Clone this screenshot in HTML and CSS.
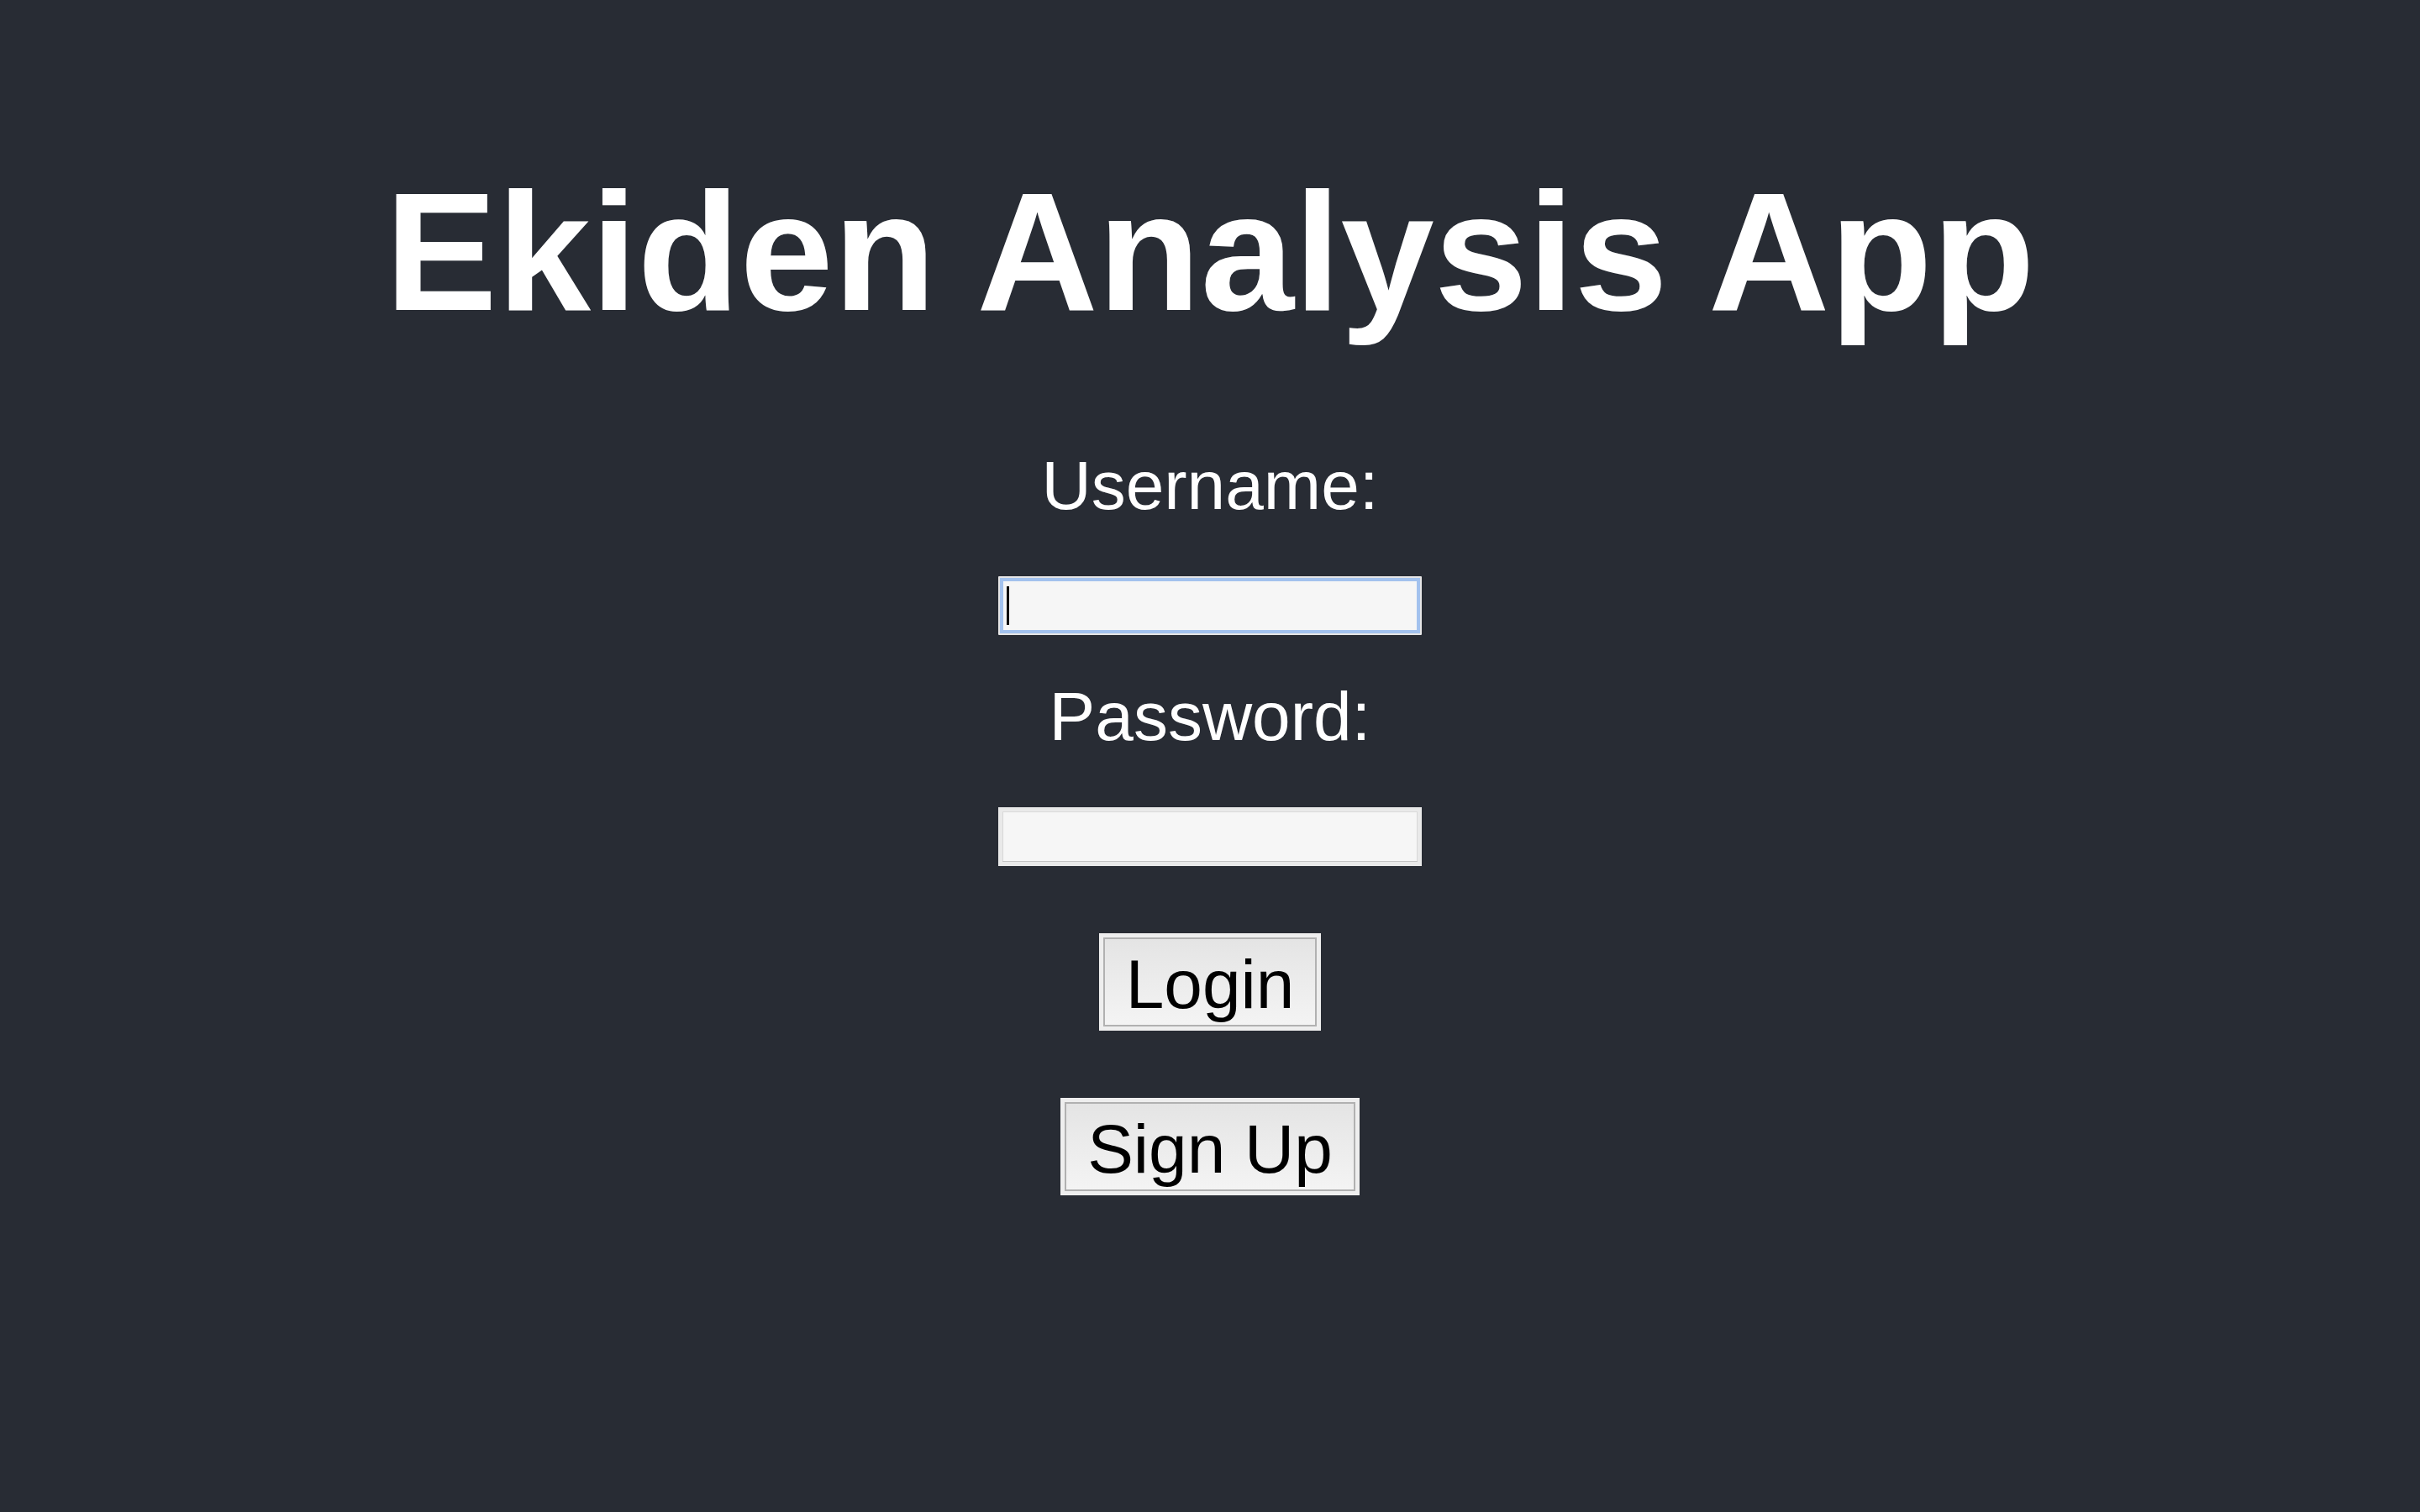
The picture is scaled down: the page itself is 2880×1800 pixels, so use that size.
FILE: index.html
```html
<!DOCTYPE html>
<html lang="en">
<head>
<meta charset="utf-8">
<title>Ekiden Analysis App</title>
<link rel="stylesheet" href="styles.css">
</head>
<body>
<div class="app">
  <header class="app-header">
    <h1 class="title">Ekiden Analysis App</h1>
    <form class="login-form">
      <label class="field-label" for="username">Username:</label>
      <div class="input-wrap input-wrap-user">
        <input class="field field-focused" id="username" type="text">
        <span class="caret"></span>
      </div>
      <label class="field-label" for="password">Password:</label>
      <div class="input-wrap input-wrap-pass">
        <input class="field" id="password" type="password">
      </div>
      <button class="btn btn-login" type="button">Login</button>
      <button class="btn" type="button">Sign Up</button>
    </form>
  </header>
</div>
</body>
</html>
```
FILE: styles.css
```css
html, body {
  margin: 0;
  padding: 0;
  background: #282c34;
}

body {
  font-family: "Liberation Sans", Arial, Helvetica, sans-serif;
  color: #ffffff;
}

.app {
  min-height: 1800px;
  background: #282c34;
}

.app-header {
  display: flex;
  flex-direction: column;
  align-items: center;
  padding-top: 185px;
}

.title {
  margin: 0 0 116px 0;
  font-size: 200px;
  font-weight: 700;
  line-height: normal;
  color: #ffffff;
}

.login-form {
  display: flex;
  flex-direction: column;
  align-items: center;
}

.field-label {
  font-size: 82px;
  line-height: normal;
  color: #ffffff;
  margin-bottom: 61px;
}

.input-wrap {
  position: relative;
  width: 504px;
  height: 70px;
}

.input-wrap-user {
  margin-bottom: 50px;
}

.input-wrap-pass {
  margin-bottom: 80px;
}

.field {
  display: block;
  box-sizing: border-box;
  width: 504px;
  height: 70px;
  margin: 0;
  padding: 0 12px;
  border: 5px solid #e9e9e9;
  background: #f6f6f6;
  box-shadow: inset 0 1px 0 #dadada, inset 0 -1px 0 #c4c4c4, inset 1px 0 0 #d8d8d8, inset -1px 0 0 #d8d8d8;
  font-family: "Liberation Sans", Arial, sans-serif;
  font-size: 40px;
  outline: none;
}

.field-focused {
  border: 2px solid #e6e6e6;
  box-shadow: inset 0 0 0 4px #a3c2ee;
  border-radius: 1px;
}

.caret {
  position: absolute;
  left: 10px;
  top: 12px;
  width: 3px;
  height: 46px;
  background: #000000;
}

.btn {
  box-sizing: border-box;
  margin: 0;
  padding: 9px 27px 3px;
  border: 5px solid #eeeeee;
  background: linear-gradient(#e4e4e4, #f4f4f4);
  box-shadow: inset 0 0 0 2px #b1b1b1;
  font-family: "Liberation Sans", Arial, sans-serif;
  font-size: 82px;
  line-height: 94px;
  color: #000000;
  border-radius: 0;
  cursor: pointer;
}

.btn-login {
  margin-bottom: 80px;
}
```
